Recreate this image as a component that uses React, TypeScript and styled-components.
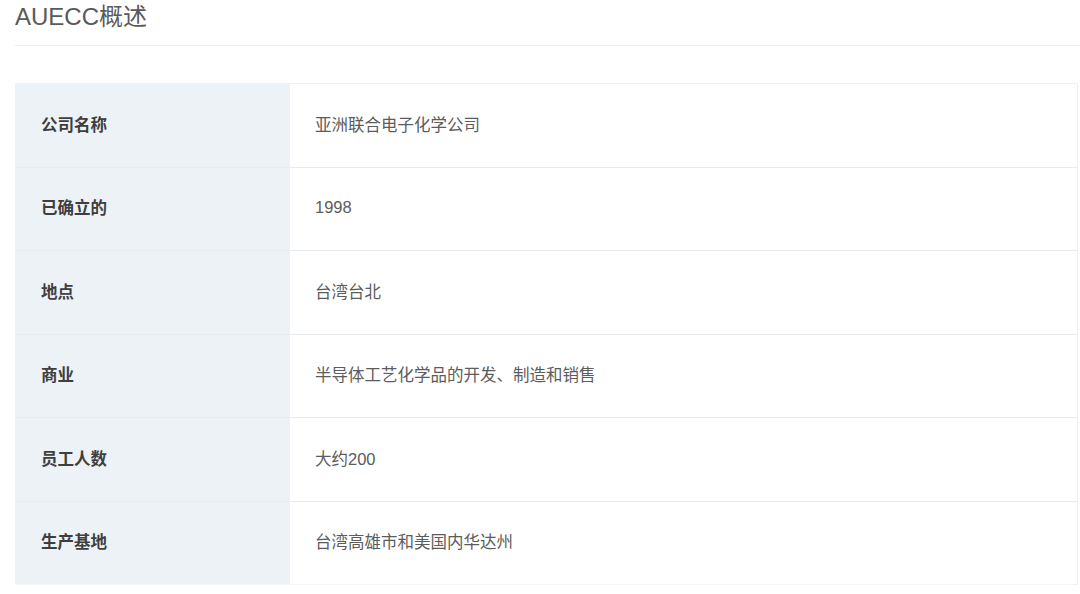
import { FC } from "react";
import styled, { createGlobalStyle } from "styled-components";

const rows = [
  { label: "公司名称", value: "亚洲联合电子化学公司" },
  { label: "已确立的", value: "1998" },
  { label: "地点", value: "台湾台北" },
  { label: "商业", value: "半导体工艺化学品的开发、制造和销售" },
  { label: "员工人数", value: "大约200" },
  { label: "生产基地", value: "台湾高雄市和美国内华达州" },
];

const App: FC = () => {
  return (
    <Page>
      <GlobalStyle />
      <Header>
        <Title>AUECC概述</Title>
      </Header>
      <Table>
        {rows.map((row) => (
          <Row key={row.label}>
            <Label>{row.label}</Label>
            <Value>{row.value}</Value>
          </Row>
        ))}
      </Table>
    </Page>
  );
};

export default App;

const GlobalStyle = createGlobalStyle`
  body {
    margin: 0;
    background: #ffffff;
    font-family: "Liberation Sans", "Noto Sans CJK SC", sans-serif;
  }
`;

const Page = styled.div`
  padding-left: 15px;
  width: 1065px;
  height: 594px;
  overflow: hidden;
`;

const Header = styled.div`
  height: 46px;
  border-bottom: 1px solid #ececec;
  box-sizing: border-box;
  padding-top: 3px;
`;

const Title = styled.h1`
  margin: 0;
  font-size: 24px;
  line-height: 28px;
  font-weight: normal;
  color: #5a5a5a;
`;

const Table = styled.div`
  margin-top: 37px;
  border-top: 1px solid #f0f0f0;
  border-right: 1px solid #eeeeee;
  margin-right: 2px;
`;

const Row = styled.div`
  display: grid;
  grid-template-columns: 275px 1fr;
  height: 83.5px;
  border-bottom: 1px solid #e9ecef;
  box-sizing: border-box;

  &:last-child {
    border-bottom: 1px solid #f4f4f4;
  }
`;

const Label = styled.div`
  display: flex;
  align-items: center;
  padding-left: 26px;
  padding-bottom: 3px;
  background: #edf2f6;
  font-size: 16.5px;
  font-weight: bold;
  color: #3e3e3e;
`;

const Value = styled.div`
  display: flex;
  align-items: center;
  padding-left: 25px;
  padding-bottom: 3px;
  font-size: 16.5px;
  color: #5c5c5c;
`;
